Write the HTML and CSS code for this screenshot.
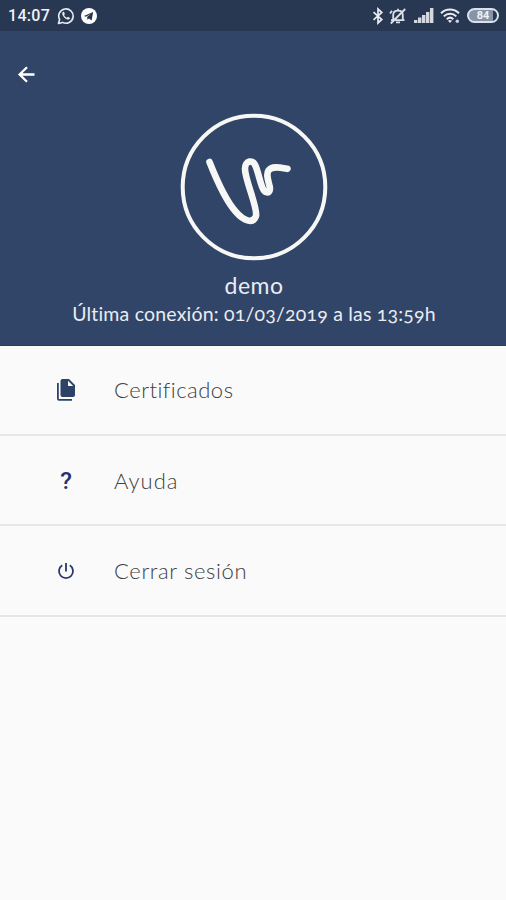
FILE: index.html
```html
<!DOCTYPE html>
<html lang="es">
<head>
    <meta charset="UTF-8">
    <meta name="viewport" content="width=device-width, initial-scale=1.0">
    <title>Perfil</title>
    <link rel="stylesheet" href="styles.css">
</head>
<body>
    <div class="status-bar">
        <span class="time">14:07</span>
        <!-- WhatsApp -->
        <svg class="whatsapp" width="18" height="18" viewBox="0 0 18 18" fill="none">
            <path d="M1.5 16.5l1.1-4A7.2 7.2 0 1 1 5.500 15.400z" stroke="#e8ebf1" stroke-width="1.6" stroke-linejoin="round"/>
            <path d="M6.200 4.800c-1 .7-1.200 1.800-.8 2.900.9 2.300 2.700 4 5 4.800 1.300.4 2.300-.2 2.700-1.500l-2.200-1.200-1 1c-1.300-.5-2.200-1.400-2.800-2.700l.8-1-.8-2.200z" fill="#e8ebf1"/>
        </svg>
        <!-- Telegram -->
        <svg class="telegram" width="16" height="16" viewBox="0 0 16 16">
            <circle cx="8" cy="8" r="8" fill="#fff"/>
            <path d="M2.900 7.900l9.300-3.800-1.600 8.300-2.700-2-1.400 1.400-.4-2.700 3.600-3-4.700 2.700z" fill="#26364f"/>
        </svg>
        <div class="status-right">
            <!-- Bluetooth -->
            <svg width="12" height="18" viewBox="0 0 12 18" fill="none" stroke="#e8ebf1" stroke-width="1.700">
                <path d="M1.500 5.200l8.300 7.300L6 16V2l3.800 3.500-8.300 7.300"/>
            </svg>
            <!-- Muted bell -->
            <svg class="bell" width="18" height="18" viewBox="0 0 18 18" fill="none" stroke="#dce1e9" stroke-width="1.800">
                <path d="M2 13.200h13.500M4.200 13V8.200c0-2.700 1.600-4.500 4.800-4.500s4.800 1.800 4.800 4.500V13M9 3.700V1.800M7 15.400h4M1.800 16.500L16.200 2M1 6.500l2-2.800"/>
            </svg>
            <!-- Signal -->
            <svg class="signal" width="20" height="15" viewBox="0 0 20 15" fill="#d3d8e1">
                <path d="M0 12h3.400v3H0zM4 9.500h3.400V15H4zM8 7h3.400v8H8zM12 4h3.400v11H12zM16 0h3.400v15H16z"/>
            </svg>
            <!-- Wifi -->
            <svg class="wifi" width="21" height="16" viewBox="0 0 21 16" fill="none" stroke="#e8ebf1" stroke-width="2">
                <path d="M1 5.200c5-5 13-5 18 0M3.800 8.400c3.500-3.500 9-3.500 12.500 0M6.800 11.300c2-2 4.500-2 6.500 0"/>
                <path d="M8 12.700l2 2.300 2-2.300c-1-1-3-1-4 0z" fill="#e8ebf1" stroke="none"/>
                <circle cx="17.300" cy="13.300" r="1.700" fill="#cbd2dd" stroke="none"/>
            </svg>
            <span class="battery">84</span>
        </div>
    </div>

    <div class="profile">
        <svg class="back" width="18" height="18" viewBox="0 0 18 18" fill="none" stroke="#fff" stroke-width="2.300">
            <path d="M17.500 8.500H3M10 1.300L2.600 8.500l7.400 7.200"/>
        </svg>
        <svg class="avatar" width="148" height="148" viewBox="0 0 148 148" fill="none" stroke="#f7f7f5">
            <circle cx="74" cy="74" r="71.300" stroke-width="4"/>
            <path d="M29.500 49C37 68 46 88 56 99C63 107 73 112 76 103C78 95 65 67 65 56C65 47 73 46 76 54C79 62 81 74 84 77.500C88 82 91 78 89.500 73C88 67 86 61 88.500 57.500C92 52.500 100 54.500 107.500 55.800" stroke-width="6.600" stroke-linecap="round" stroke-linejoin="round"/>
        </svg>
        <div class="name">demo</div>
        <div class="last-login">Última conexión: 01/03/2019 a las 13:59h</div>
    </div>

    <div class="menu">
        <div class="menu-item">
            <svg width="24" height="24" viewBox="0 0 24 24" fill="#2d4267">
                <path d="M8.500 1H15l6 6v10a2 2 0 0 1-2 2H8.500a2 2 0 0 1-2-2V3a2 2 0 0 1 2-2zm5.500 1.800V8h5.200z"/>
                <path d="M3 5h1.800v16H18v1.800H5a2 2 0 0 1-2-2z"/>
            </svg>
            <span class="label certificates">Certificados</span>
        </div>
        <div class="menu-item">
            <span class="question">?</span>
            <span class="label help">Ayuda</span>
        </div>
        <div class="menu-item">
            <svg width="24" height="24" viewBox="0 0 24 24" fill="none" stroke="#2b3769" stroke-width="1.800">
                <path d="M12 4v8.500M8.200 6.300a7 7 0 1 0 7.600 0"/>
            </svg>
            <span class="label logout">Cerrar sesión</span>
        </div>
    </div>
</body>
</html>
```
FILE: styles.css
```css
body {
    margin: 0;
    min-height: 100vh;
    background-color: #fafafa;
    font-family: Lato, sans-serif;
}

svg {
    display: block;
    flex: none;
}

.status-bar {
    display: flex;
    align-items: center;
    height: 31px;
    padding: 0 7px 0 8px;
    box-sizing: border-box;
    background-color: #283852;
    color: #f0f2f6;
}

.time {
    width: 42px;
    font-family: Roboto, sans-serif;
    font-size: 16px;
    font-weight: 500;
    letter-spacing: 0.3px;
}

.whatsapp {
    margin-left: 7px;
}

.telegram {
    margin-left: 6px;
}

.status-right {
    display: flex;
    align-items: center;
    margin-left: auto;
}

.bell {
    margin-left: 5px;
}

.signal {
    margin-left: 7px;
}

.wifi {
    margin-left: 6px;
}

.battery {
    width: 32px;
    height: 15px;
    margin-left: 6px;
    box-sizing: border-box;
    border: 2px solid #dce1e9;
    border-radius: 8px;
    background: linear-gradient(90deg, #8793a6 84%, #283852 84%);
    font: bold 11px/11px Roboto, sans-serif;
    text-align: center;
}

.profile {
    display: flex;
    flex-direction: column;
    align-items: center;
    height: 315px;
    padding: 35px 0 0 2px;
    box-sizing: border-box;
    background-color: #314568;
    border-bottom: 1px solid #1d3e60;
    color: #e9ecf2;
}

.back {
    align-self: flex-start;
    margin-left: 15px;
}

.avatar {
    margin-top: 29px;
}

.name {
    margin-top: 10px;
    font-size: 23px;
    line-height: 29px;
    letter-spacing: 0.5px;
}

.last-login {
    font-size: 19.5px;
    line-height: 27px;
    letter-spacing: 0.2px;
    font-variant-numeric: oldstyle-nums;
    white-space: nowrap;
}

.menu-item {
    display: flex;
    align-items: center;
    height: 90px;
    padding-left: 54px;
    box-sizing: border-box;
    border-bottom: 2px solid #e6e6e6;
}

.menu-item:last-child {
    height: 91px;
}

.question {
    width: 24px;
    padding-top: 2px;
    color: #29306a;
    font: 500 24px/24px Roboto, sans-serif;
    text-align: center;
}

.label {
    margin-left: 36px;
    color: #404040;
    font-size: 22px;
    font-weight: 300;
    line-height: 28px;
}

.certificates {
    letter-spacing: 0.5px;
}

.help {
    padding-top: 1px;
    letter-spacing: 1px;
}

.logout {
    letter-spacing: 0.65px;
}
```
